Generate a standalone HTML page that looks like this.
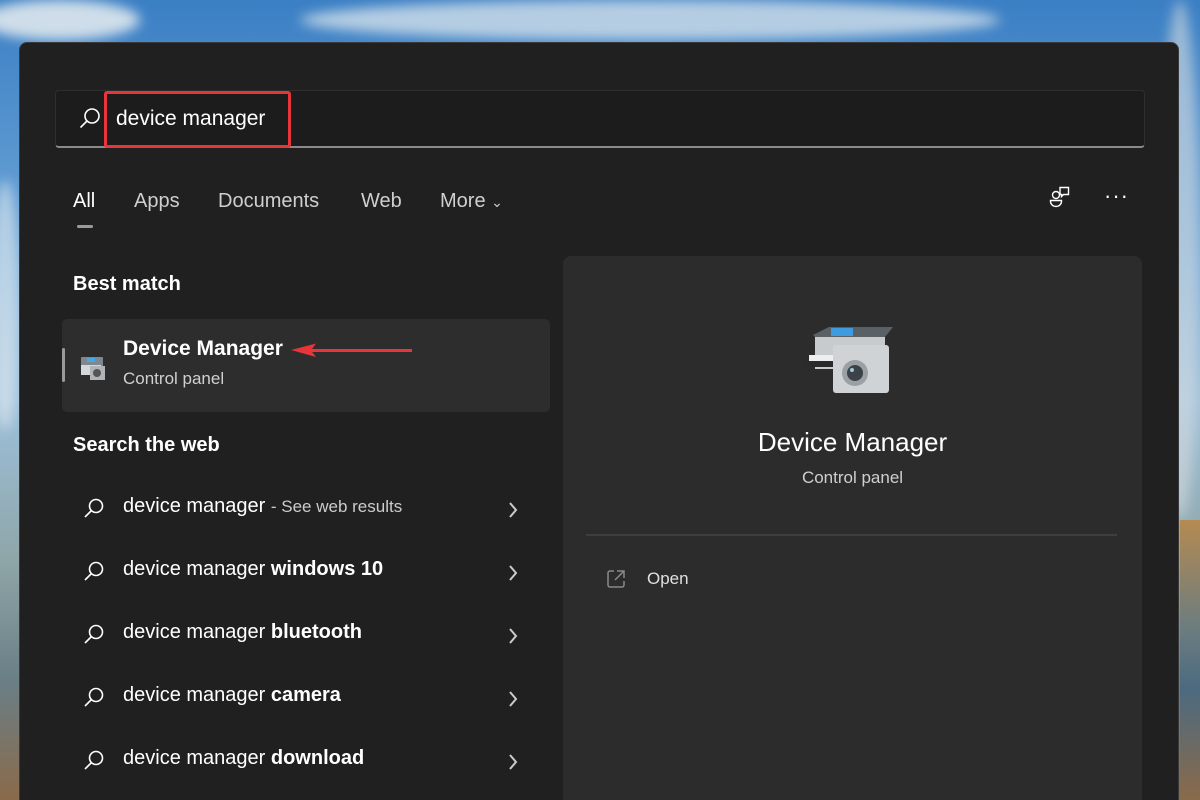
<!DOCTYPE html>
<html style="width:1200px;height:800px;overflow:hidden"><head><style>
*{margin:0;padding:0;box-sizing:border-box}
body{width:1200px;height:800px;overflow:hidden;position:relative;font-family:"Segoe UI","Liberation Sans",sans-serif;
background:linear-gradient(180deg,#3b7fc4 0%,#6aa3d6 30%,#9cc0dc 50%,#8fa6a8 70%,#6a7f86 85%,#8a6a4a 100%);}
.cl{position:absolute;border-radius:50%;background:#e8eef0;filter:blur(6px);opacity:.85}
.win{position:absolute;left:19px;top:42px;width:1160px;height:758px;overflow:hidden;background:#202020;border-radius:8px 8px 0 0;border:1px solid #3a3a3a;border-bottom:none}
.abs{position:absolute}
.search{left:35px;top:47px;width:1090px;height:58px;background:#1c1c1c;border:1px solid #2e2e2e;border-bottom:2px solid #8a8a8a;border-radius:4px}
.t{color:#fff;white-space:nowrap}
.tabs span{position:absolute;top:147px;font-size:20px;color:#cfcfcf}
.row{position:absolute;left:0;width:460px;height:30px;font-size:20px;color:#fff}
.row .b{font-weight:bold}
.chev{position:absolute;left:425px;top:6px}
</style></head><body>
<div class="cl" style="left:-20px;top:0;width:160px;height:40px"></div>
<div class="cl" style="left:300px;top:0;width:700px;height:40px;opacity:.7"></div>
<div class="cl" style="left:-10px;top:180px;width:30px;height:250px;opacity:.6"></div>
<div class="cl" style="left:1160px;top:0;width:40px;height:520px;opacity:.6;background:#d8dde0"></div>
<div class="abs" style="left:1180px;top:520px;width:20px;height:280px;background:linear-gradient(180deg,#b58a52,#6a7c80 40%,#4c6a80 60%,#8a6a4a)"></div>

<div class="win">
 <div class="abs search"></div>
 <svg class="abs" style="left:58px;top:64px" width="24" height="24" viewBox="0 0 24 24" fill="none" stroke="#fff" stroke-width="1.6"><circle cx="14" cy="9" r="7"/><path d="M9 14L2.5 20.5"/></svg>
 <div class="abs t" style="left:96px;top:64px;font-size:21px">device manager</div>
 <div class="abs" style="left:84px;top:48px;width:187px;height:57px;border:3px solid #e8343a;border-radius:3px"></div>

 <div class="tabs">
  <span style="left:53px;color:#fff">All</span>
  <span style="left:114px">Apps</span>
  <span style="left:198px">Documents</span>
  <span style="left:341px">Web</span>
  <span style="left:420px">More <small style="font-size:14px">&#8964;</small></span>
 </div>
 <div class="abs" style="left:57px;top:182px;width:16px;height:3px;border-radius:2px;background:#9a9a9a"></div>
 <svg class="abs" style="left:1028px;top:142px" width="28" height="28" viewBox="0 0 28 28" fill="none" stroke="#fff" stroke-width="1.4"><circle cx="8" cy="10" r="3.5"/><path d="M2.5 15.5h11v1a5.5 5 0 0 1-11 0v-1z"/><path d="M12 2.5h8.5v7h-5l-2 2v-2h-1.5z"/></svg>
 <div class="abs t" style="left:1084px;top:140px;font-size:22px;letter-spacing:1px">&middot;&middot;&middot;</div>

 <div class="abs t" style="left:53px;top:230px;font-size:20px;font-weight:bold">Best match</div>
 <div class="abs" style="left:42px;top:276px;width:488px;height:93px;background:#2d2d2d;border-radius:5px"></div>
 <div class="abs" style="left:42px;top:305px;width:3px;height:34px;background:#9a9a9a;border-radius:2px"></div>
 <svg class="abs" style="left:58px;top:310px" width="30" height="30" viewBox="0 0 30 30"><rect x="3" y="4" width="22" height="10" rx="1" fill="#7d8890"/><rect x="9" y="5" width="8" height="4" fill="#4aa8e0"/><rect x="3" y="12" width="20" height="10" fill="#d5d8da"/><rect x="12" y="13" width="15" height="14" fill="#b0b4b6"/><circle cx="19" cy="20" r="4" fill="#555"/></svg>
 <div class="abs t" style="left:103px;top:294px;font-size:21px;font-weight:bold">Device Manager</div>
 <div class="abs" style="left:103px;top:326px;font-size:17px;color:#d0d0d0">Control panel</div>
 <svg class="abs" style="left:270px;top:299px" width="125" height="16" viewBox="0 0 125 16"><path d="M20 8.5H122" stroke="#e8343a" stroke-width="3"/><path d="M1 8L26 1.5L21 8.5L26 15z" fill="#e8343a"/></svg>

 <div class="abs t" style="left:53px;top:391px;font-size:20px;font-weight:bold">Search the web</div>
 <div style="position:absolute;left:62px;top:0">
  <div class="row" style="top:452px"><svg class="abs" style="left:0;top:2px" width="24" height="24" viewBox="0 0 24 24" fill="none" stroke="#fff" stroke-width="1.6"><circle cx="14" cy="9" r="6.5"/><path d="M9.5 13.5L3 20"/></svg><span style="position:absolute;left:41px">device manager <span style="color:#ccc;font-size:17px">- See web results</span></span><svg class="chev" width="12" height="18" viewBox="0 0 12 18" fill="none" stroke="#ccc" stroke-width="2"><path d="M3 2l6 7-6 7"/></svg></div>
  <div class="row" style="top:515px"><svg class="abs" style="left:0;top:2px" width="24" height="24" viewBox="0 0 24 24" fill="none" stroke="#fff" stroke-width="1.6"><circle cx="14" cy="9" r="6.5"/><path d="M9.5 13.5L3 20"/></svg><span style="position:absolute;left:41px">device manager <span class="b">windows 10</span></span><svg class="chev" width="12" height="18" viewBox="0 0 12 18" fill="none" stroke="#ccc" stroke-width="2"><path d="M3 2l6 7-6 7"/></svg></div>
  <div class="row" style="top:578px"><svg class="abs" style="left:0;top:2px" width="24" height="24" viewBox="0 0 24 24" fill="none" stroke="#fff" stroke-width="1.6"><circle cx="14" cy="9" r="6.5"/><path d="M9.5 13.5L3 20"/></svg><span style="position:absolute;left:41px">device manager <span class="b">bluetooth</span></span><svg class="chev" width="12" height="18" viewBox="0 0 12 18" fill="none" stroke="#ccc" stroke-width="2"><path d="M3 2l6 7-6 7"/></svg></div>
  <div class="row" style="top:641px"><svg class="abs" style="left:0;top:2px" width="24" height="24" viewBox="0 0 24 24" fill="none" stroke="#fff" stroke-width="1.6"><circle cx="14" cy="9" r="6.5"/><path d="M9.5 13.5L3 20"/></svg><span style="position:absolute;left:41px">device manager <span class="b">camera</span></span><svg class="chev" width="12" height="18" viewBox="0 0 12 18" fill="none" stroke="#ccc" stroke-width="2"><path d="M3 2l6 7-6 7"/></svg></div>
  <div class="row" style="top:704px"><svg class="abs" style="left:0;top:2px" width="24" height="24" viewBox="0 0 24 24" fill="none" stroke="#fff" stroke-width="1.6"><circle cx="14" cy="9" r="6.5"/><path d="M9.5 13.5L3 20"/></svg><span style="position:absolute;left:41px">device manager <span class="b">download</span></span><svg class="chev" width="12" height="18" viewBox="0 0 12 18" fill="none" stroke="#ccc" stroke-width="2"><path d="M3 2l6 7-6 7"/></svg></div>
 </div>

 <div class="abs" style="left:543px;top:213px;width:579px;height:545px;background:#2c2c2c;border-radius:8px 8px 0 0"></div>
 <svg class="abs" style="left:785px;top:282px" width="90" height="72" viewBox="0 0 90 72">
  <path d="M8 10L24 2H88L80 12H10z" fill="#5a6166"/><rect x="10" y="12" width="70" height="32" fill="#c8cbcd"/><rect x="26" y="3" width="22" height="8" fill="#3f9be0"/>
  <rect x="0" y="36" width="40" height="6" fill="#2a2a2a"/><rect x="4" y="30" width="34" height="6" fill="#eee"/>
  <rect x="28" y="20" width="56" height="48" rx="3" fill="#d0d3d5"/><circle cx="50" cy="48" r="13" fill="#9aa0a4"/><circle cx="50" cy="48" r="8" fill="#3b4248"/><circle cx="47" cy="45" r="2" fill="#9cd"/>
 </svg>
 <div class="abs t" style="left:543px;top:384px;width:579px;text-align:center;font-size:26px">Device Manager</div>
 <div class="abs" style="left:543px;top:425px;width:579px;text-align:center;font-size:17px;color:#cfcfcf">Control panel</div>
 <div class="abs" style="left:566px;top:491px;width:531px;height:2px;background:#3e3e3e"></div>
 <svg class="abs" style="left:585px;top:525px" width="22" height="22" viewBox="0 0 22 22" fill="none" stroke="#8a8a8a" stroke-width="1.5"><path d="M9 3H5a2 2 0 0 0-2 2v12a2 2 0 0 0 2 2h12a2 2 0 0 0 2-2v-4"/><path d="M12 3h7v7M19 3l-9 9"/></svg>
 <div class="abs" style="left:627px;top:526px;font-size:17px;color:#e0e0e0">Open</div>
</div>
</body></html>
